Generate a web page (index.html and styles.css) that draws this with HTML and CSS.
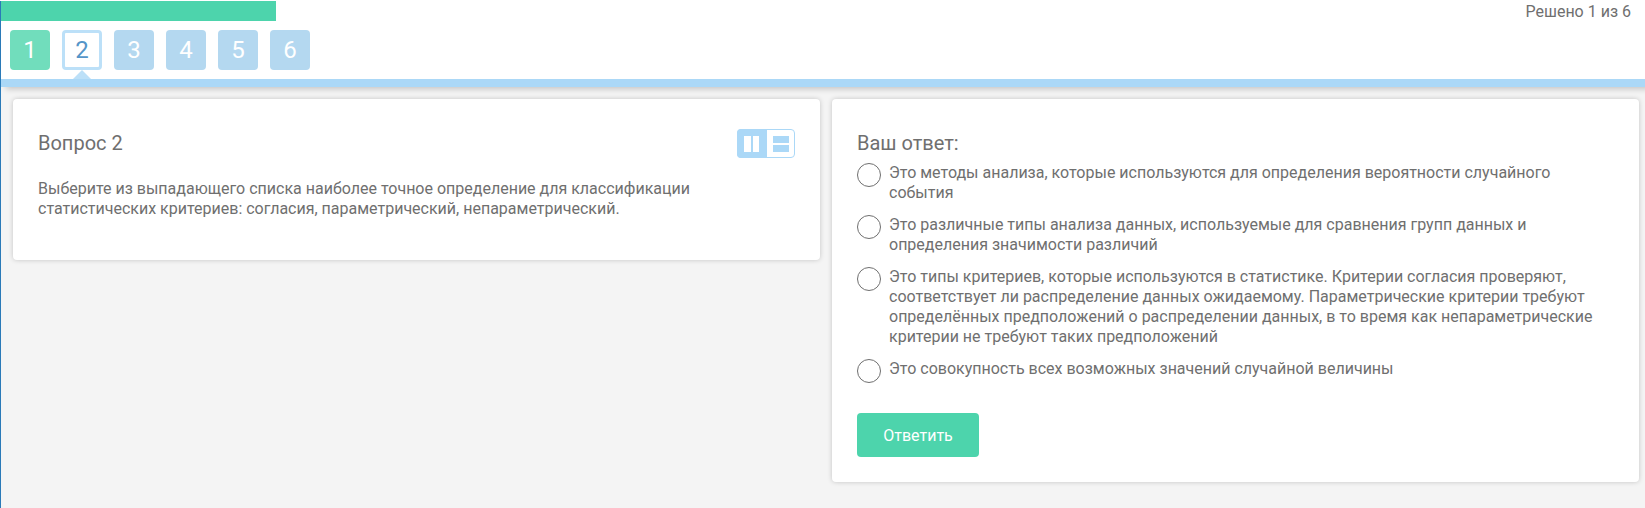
FILE: index.html
```
<!DOCTYPE html>
<html lang="ru">
<head>
<meta charset="utf-8">
<title>Вопрос 2</title>
<link rel="stylesheet" href="styles.css">
</head>
<body>
<div class="page">
  <header class="header">
    <div class="status">
      <div class="progress"></div>
      <div class="solved">Решено 1 из 6</div>
    </div>
    <nav class="tabs">
      <a class="tab tab-done">1</a>
      <a class="tab tab-current">2</a>
      <a class="tab">3</a>
      <a class="tab">4</a>
      <a class="tab">5</a>
      <a class="tab">6</a>
    </nav>
  </header>
  <main class="columns">
    <section class="card">
      <div class="card-head">
        <h1 class="title">Вопрос 2</h1>
        <svg class="toggle" width="58" height="29" viewBox="0 0 58 29">
          <rect x=".5" y=".5" width="57" height="28" rx="3.5" fill="#fff" stroke="#abd8f7"/>
          <path d="M4 0H30V29H4a4 4 0 0 1-4-4V4a4 4 0 0 1 4-4z" fill="#abd8f7"/>
          <path d="M7 7h7v16H7zM16 7h6v16h-6z" fill="#fff"/>
          <path d="M36 7h16v7H36zM36 16h16v7H36z" fill="#abd8f7"/>
        </svg>
      </div>
      <p class="question">Выберите из выпадающего списка наиболее точное определение для классификации статистических критериев: согласия, параметрический, непараметрический.</p>
    </section>
    <section class="card">
      <h2 class="title">Ваш ответ:</h2>
      <div class="options">
        <label class="option"><span class="radio"></span><span>Это методы анализа, которые используются для определения вероятности случайного события</span></label>
        <label class="option"><span class="radio"></span><span>Это различные типы анализа данных, используемые для сравнения групп данных и определения значимости различий</span></label>
        <label class="option"><span class="radio"></span><span>Это типы критериев, которые используются в статистике. Критерии согласия проверяют, соответствует ли распределение данных ожидаемому. Параметрические критерии требуют определённых предположений о распределении данных, в то время как непараметрические критерии не требуют таких предположений</span></label>
        <label class="option"><span class="radio"></span><span>Это совокупность всех возможных значений случайной величины</span></label>
      </div>
      <button class="submit">Ответить</button>
    </section>
  </main>
</div>
</body>
</html>
```
FILE: styles.css
```
* { box-sizing: border-box; }

body {
  margin: 0;
  padding-top: 1px;
  background: #fff;
  color: #6f6f6f;
  font: 16px/20px Roboto, "Noto Sans", sans-serif;
}

.page {
  height: 507px;
  border-left: 1px solid #2a7ab8;
  background: #f4f4f4;
  overflow: hidden;
}

.header {
  height: 86px;
  background: #fff;
  border-bottom: 8px solid #abd8f7;
  box-shadow: 5px 2px 6px rgba(0, 0, 0, .2);
}

.status {
  display: flex;
  justify-content: space-between;
  height: 20px;
}

.progress { width: 275px; background: #4dd4ac; }
.solved { padding: 1px 14px 0 0; }

.tabs {
  display: flex;
  gap: 12px;
  padding: 9px;
}

.tab {
  width: 40px;
  height: 40px;
  border-radius: 4px;
  background: #b4d8f0;
  color: #fff;
  font-size: 24px;
  line-height: 40px;
  text-align: center;
}

.tab-done { background: #71ddbc; }

.tab-current {
  position: relative;
  border: 3px solid #bce0f8;
  background: #fff;
  color: #5595c8;
  line-height: 34px;
}

.tab-current::after {
  content: "";
  position: absolute;
  top: 37px;
  left: 8px;
  border: solid transparent;
  border-width: 0 9px 9px;
  border-bottom-color: #bce0f8;
}

.columns {
  display: grid;
  grid-template-columns: 1fr 1fr;
  align-items: start;
  gap: 12px;
  padding: 12px 6px 0 12px;
}

.card {
  padding: 30px 25px 25px;
  border-radius: 4px;
  background: #fff;
  box-shadow: 0 0 5px rgba(0, 0, 0, .2);
}

.card-head {
  display: flex;
  justify-content: space-between;
}

.title {
  margin: 0;
  padding-top: 1px;
  font-size: 20px;
  font-weight: 400;
  line-height: 26px;
}

.question { margin: 21px 0 16px; }

.options {
  display: grid;
  gap: 12px;
  margin-top: 7px;
}

.option {
  display: flex;
  gap: 8px;
}

.radio {
  flex: none;
  width: 24px;
  height: 24px;
  border: 1px solid #6f6f6f;
  border-radius: 50%;
}

.submit {
  display: block;
  width: 122px;
  height: 44px;
  margin-top: 30px;
  padding: 2px 0 0;
  border: 0;
  border-radius: 4px;
  background: #4dd4ac;
  color: #fff;
  font: 400 16px/20px Roboto, "Noto Sans", sans-serif;
}
```
